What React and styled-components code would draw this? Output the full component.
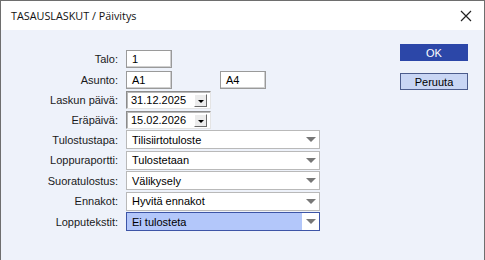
import React from "react";
import styled, { createGlobalStyle } from "styled-components";

const GlobalStyle = createGlobalStyle`
    html, body {
        margin: 0;
        padding: 0;
        width: 485px;
        height: 260px;
        overflow: hidden;
    }
    * {
        box-sizing: border-box;
    }
`;

const Window = styled.div`
    width: 485px;
    height: 260px;
    display: flex;
    flex-direction: column;
    border: 1px solid #6e6e6e;
    border-bottom: none;
    background: #eef2fa;
    font-family: "Liberation Sans", Arial, sans-serif;
    font-size: 11px;
    color: #000;
`;

const TitleBar = styled.div`
    height: 29px;
    flex-shrink: 0;
    display: flex;
    align-items: center;
    justify-content: space-between;
    padding: 0 12px 0 10px;
    background: #ffffff;
    font-family: "Open Sans", "Noto Sans", sans-serif;
    font-size: 10.8px;
    color: #111;
`;

const Close = styled.svg`
    width: 12px;
    height: 12px;
`;

const Body = styled.div`
    flex: 1;
    display: flex;
    padding-top: 20px;
`;

const Form = styled.div`
    display: flex;
    flex-direction: column;
    width: 319px;
`;

const Row = styled.div`
    display: flex;
    align-items: center;
    gap: 8px;
    height: ${(p) => p.$h || 18}px;
    margin-bottom: ${(p) => p.$gap ?? 2}px;
`;

const Label = styled.div`
    width: 117px;
    text-align: right;
    color: #1a1a1a;
    white-space: nowrap;
`;

const TextBox = styled.div`
    width: ${(p) => p.$w || 46}px;
    height: 18px;
    margin-left: ${(p) => p.$ml || 0}px;
    padding: 1px 5px;
    line-height: 14px;
    background: #fff;
    border: 2px solid #c4c4c4;
    border-width: 1px 2px 2px 1px;
    border-color: #b0b0b0 #d0d0d0 #d0d0d0 #b0b0b0;
    outline: 1px solid #9a9a9a;
    outline-offset: -1px;
`;

const DateBox = styled.div`
    width: 85px;
    height: 18px;
    display: flex;
    align-items: center;
    justify-content: space-between;
    padding: 0 3px 0 4px;
    background: #fff;
    border: 1px solid;
    border-color: #8c8c8c #e4e4e4 #e4e4e4 #8c8c8c;
    box-shadow: inset 1px 1px 0 #b8b8b8;
`;

const DateButton = styled.div`
    width: 13px;
    height: 13px;
    display: flex;
    align-items: center;
    justify-content: center;
    background: #ececec;
    border: 1px solid;
    border-color: #ffffff #6a6a6a #6a6a6a #ffffff;
    &::after {
        content: "";
        width: 0;
        height: 0;
        margin-top: 3px;
        border-left: 3px solid transparent;
        border-right: 3px solid transparent;
        border-top: 3px solid #000;
    }
`;

const Select = styled.div`
    width: 194px;
    height: 19px;
    display: flex;
    align-items: center;
    justify-content: space-between;
    padding-left: 5px;
    background: ${(p) => (p.$active ? "#b3c7fa" : "#fff")};
    border: 1px solid ${(p) => (p.$active ? "#3d55a6" : "#b9b9b9")};
`;

const Arrow = styled.div`
    width: 17px;
    height: 100%;
    display: flex;
    align-items: center;
    justify-content: center;
    background: #fff;
    &::after {
        content: "";
        width: 0;
        height: 0;
        border-left: 5px solid transparent;
        border-right: 5px solid transparent;
        border-top: 5px solid #777;
    }
`;

const Buttons = styled.div`
    margin-left: auto;
    margin-right: 16px;
    margin-top: -6px;
    display: flex;
    flex-direction: column;
    gap: 12px;
`;

const Button = styled.div`
    width: 68px;
    height: 17px;
    display: flex;
    align-items: center;
    justify-content: center;
    background: ${(p) => (p.$primary ? "#2c47a8" : "#c9d6f4")};
    color: ${(p) => (p.$primary ? "#fff" : "#000")};
    border: 1px solid ${(p) => (p.$primary ? "#2c47a8" : "#4c5c8c")};
`;

const selects = [
    { label: "Tulostustapa:", value: "Tilisiirtotuloste" },
    { label: "Loppuraportti:", value: "Tulostetaan" },
    { label: "Suoratulostus:", value: "Välikysely" },
    { label: "Ennakot:", value: "Hyvitä ennakot" },
    { label: "Lopputekstit:", value: "Ei tulosteta", active: true },
];

const App = () => {
    return (
        <>
            <GlobalStyle />
            <Window>
                <TitleBar>
                    <span>TASAUSLASKUT / Päivitys</span>
                    <Close viewBox="0 0 12 12">
                        <path
                            d="M1 1 L11 11 M11 1 L1 11"
                            stroke="#222"
                            strokeWidth="1.2"
                            fill="none"
                        />
                    </Close>
                </TitleBar>
                <Body>
                    <Form>
                        <Row $gap={3}>
                            <Label>Talo:</Label>
                            <TextBox>1</TextBox>
                        </Row>
                        <Row $gap={2}>
                            <Label>Asunto:</Label>
                            <TextBox>A1</TextBox>
                            <TextBox $ml={40}>A4</TextBox>
                        </Row>
                        <Row $gap={2}>
                            <Label>Laskun päivä:</Label>
                            <DateBox>
                                31.12.2025
                                <DateButton />
                            </DateBox>
                        </Row>
                        <Row $gap={1}>
                            <Label>Eräpäivä:</Label>
                            <DateBox>
                                15.02.2026
                                <DateButton />
                            </DateBox>
                        </Row>
                        {selects.map((s) => (
                            <Row key={s.label} $h={19} $gap={1.5}>
                                <Label>{s.label}</Label>
                                <Select $active={s.active}>
                                    {s.value}
                                    <Arrow />
                                </Select>
                            </Row>
                        ))}
                    </Form>
                    <Buttons>
                        <Button $primary>OK</Button>
                        <Button>Peruuta</Button>
                    </Buttons>
                </Body>
            </Window>
        </>
    );
};

export default App;
